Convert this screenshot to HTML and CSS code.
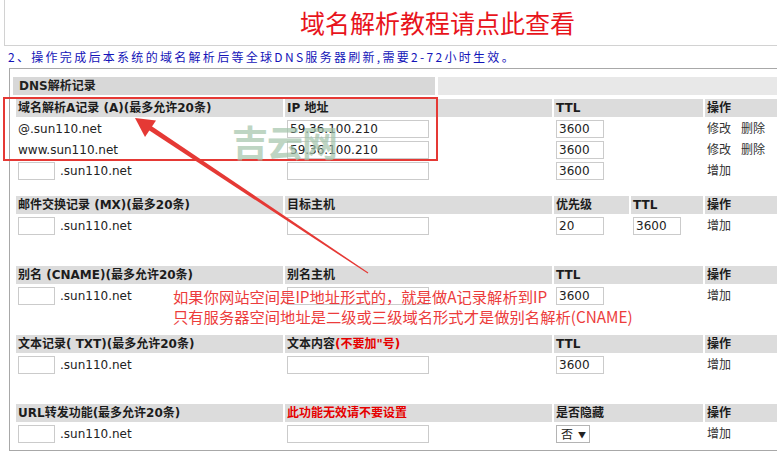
FILE: index.html
```html
<!DOCTYPE html>
<html lang="zh-CN">
<head>
  <meta charset="UTF-8" />
  <title>DNS解析记录</title>
  <link rel="stylesheet" href="styles.css">
</head>
<body>
<div class="screen">
  <div class="page">
    <div class="title-bar"><a class="title" href="#">域名解析教程请点此查看</a></div>
    <div class="notice">2、操作完成后本系统的域名解析后等全球DNS服务器刷新,需要2-72小时生效。</div>

    <div class="panel">
      <div class="panel-head">
        <div class="panel-title">DNS解析记录</div>
        <div class="panel-fill"></div>
      </div>

      <table class="records">
        <colgroup>
          <col class="c1"><col class="c2"><col class="c3"><col class="c4"><col class="c5">
        </colgroup>

        <!-- A -->
        <tr>
          <th>域名解析A记录 (A)(最多允许20条)</th>
          <th>IP 地址</th>
          <th colspan="2">TTL</th>
          <th>操作</th>
        </tr>
        <tr>
          <td>@.sun110.net</td>
          <td><input class="ip" value="59.36.100.210"></td>
          <td colspan="2"><input class="ttl" value="3600"></td>
          <td><a class="op" href="#">修改</a><a class="op" href="#">删除</a></td>
        </tr>
        <tr>
          <td>www.sun110.net</td>
          <td><input class="ip" value="59.36.100.210"></td>
          <td colspan="2"><input class="ttl" value="3600"></td>
          <td><a class="op" href="#">修改</a><a class="op" href="#">删除</a></td>
        </tr>
        <tr>
          <td><input class="sub"><span class="zone">.sun110.net</span></td>
          <td><input class="ip"></td>
          <td colspan="2"><input class="ttl" value="3600"></td>
          <td><a class="op" href="#">增加</a></td>
        </tr>
        <tr class="gap gap-s"><td colspan="5"></td></tr>

        <!-- MX -->
        <tr>
          <th>邮件交换记录 (MX)(最多20条)</th>
          <th>目标主机</th>
          <th>优先级</th>
          <th>TTL</th>
          <th>操作</th>
        </tr>
        <tr>
          <td><input class="sub"><span class="zone">.sun110.net</span></td>
          <td><input class="ip"></td>
          <td><input class="ttl" value="20"></td>
          <td><input class="ttl" value="3600"></td>
          <td><a class="op" href="#">增加</a></td>
        </tr>
        <tr class="gap gap-l"><td colspan="5"></td></tr>

        <!-- CNAME -->
        <tr>
          <th>别名 (CNAME)(最多允许20条)</th>
          <th>别名主机</th>
          <th colspan="2">TTL</th>
          <th>操作</th>
        </tr>
        <tr>
          <td><input class="sub"><span class="zone">.sun110.net</span></td>
          <td><input class="ip"></td>
          <td colspan="2"><input class="ttl" value="3600"></td>
          <td><a class="op" href="#">增加</a></td>
        </tr>
        <tr class="gap"><td colspan="5"></td></tr>

        <!-- TXT -->
        <tr>
          <th>文本记录( TXT)(最多允许20条)</th>
          <th>文本内容<span class="warn">(不要加"号)</span></th>
          <th colspan="2">TTL</th>
          <th>操作</th>
        </tr>
        <tr>
          <td><input class="sub"><span class="zone">.sun110.net</span></td>
          <td><input class="ip"></td>
          <td colspan="2"><input class="ttl" value="3600"></td>
          <td><a class="op" href="#">增加</a></td>
        </tr>
        <tr class="gap"><td colspan="5"></td></tr>

        <!-- URL -->
        <tr>
          <th>URL转发功能(最多允许20条)</th>
          <th><span class="warn">此功能无效请不要设置</span></th>
          <th colspan="2">是否隐藏</th>
          <th>操作</th>
        </tr>
        <tr>
          <td><input class="sub"><span class="zone">.sun110.net</span></td>
          <td><input class="ip"></td>
          <td colspan="2"><span class="select">否<span class="caret">▼</span></span></td>
          <td><a class="op" href="#">增加</a></td>
        </tr>
      </table>
    </div>
  </div>

  <!-- annotations drawn over the screenshot -->
  <div class="mark-box"></div>
  <div class="watermark">吉云网</div>
  <div class="note">如果你网站空间是IP地址形式的，就是做A记录解析到IP<br>只有服务器空间地址是二级或三级域名形式才是做别名解析(CNAME)</div>
  <svg class="arrow" width="777" height="457" viewBox="0 0 777 457">
    <polygon points="151.4,125.9 368.3,272.5 367.7,273.5 148.6,130.1" fill="#e53935"/>
    <polygon points="135,118 156,120.5 145,137" fill="#e53935"/>
  </svg>
</div>
</body>
</html>
```

FILE: styles.css
```css
html, body {
  margin: 0;
  overflow: hidden;
}
body {
  background: #fff;
  font-family: "DejaVu Sans", Verdana, "Noto Sans CJK SC", sans-serif;
  font-size: 12px;
  color: #222;
}
.screen {
  position: relative;
  width: 777px;
  height: 457px;
  overflow: hidden;
}
.page {
  width: 866px;
  margin-left: 4px;
}
.title-bar {
  height: 45px;
  line-height: 45px;
  border-left: 1px solid #d2d2d2;
  border-bottom: 1px solid #d2d2d2;
  text-align: center;
}
.title {
  font-family: "Noto Sans CJK SC", sans-serif;
  font-size: 25px;
  font-weight: 400;
  color: #e8141c;
  text-decoration: none;
}
.notice {
  height: 22px;
  line-height: 22px;
  padding-left: 4px;
  font-family: "Noto Sans CJK SC", sans-serif;
  font-size: 12px;
  letter-spacing: 2.3px;
  color: #1414b8;
  white-space: nowrap;
}
.panel {
  margin-left: 5px;
  border: 1px solid #a8a8a8;
  padding: 8px 0 5px 3px;
}
.panel-head {
  display: flex;
  gap: 3px;
  height: 18px;
  margin-bottom: 2px;
}
.panel-title {
  width: 416px;
  padding-left: 6px;
  background: #d8d8d8;
  font-weight: bold;
  line-height: 18px;
}
.panel-fill {
  flex: 1;
  background: #e8e8e8;
}
.records {
  border-collapse: separate;
  border-spacing: 2px;
  table-layout: fixed;
  margin-left: 1px;
}
.c1 { width: 267px; }
.c2 { width: 267px; }
.c3 { width: 75px; }
.c4 { width: 72px; }
.c5 { width: 150px; }
.records th {
  height: 18px;
  padding: 0 2px;
  background: #dcdcdc;
  text-align: left;
  font-weight: bold;
  line-height: 18px;
  white-space: nowrap;
  color: #1c1c1c;
}
.records td {
  height: 19px;
  padding: 0 1px 0 2px;
  line-height: 18px;
  white-space: nowrap;
}
.records tr.gap td { height: 26px; padding: 0; }
.records tr.gap-s td { height: 12px; }
.records tr.gap-l td { height: 27px; }
.warn {
  color: #e60000;
}
input {
  box-sizing: border-box;
  height: 18px;
  margin: 0;
  padding: 0 2px;
  border: 1px solid #cbcbcb;
  font-family: "DejaVu Sans", Verdana, sans-serif;
  font-size: 12px;
  color: #222;
  vertical-align: middle;
}
.ip { width: 142px; }
.ttl { width: 48px; }
.sub { width: 37px; }
.zone {
  margin-left: 5px;
  vertical-align: middle;
}
.select {
  display: inline-block;
  box-sizing: border-box;
  width: 34px;
  height: 18px;
  padding-left: 4px;
  border: 1px solid #b4b4b4;
  font-family: "Noto Sans CJK SC", sans-serif;
  line-height: 16px;
  vertical-align: middle;
}
.caret {
  margin-left: 5px;
  font-size: 8px;
  vertical-align: 1px;
}
.op {
  color: #333;
  text-decoration: none;
  font-family: "Noto Sans CJK SC", sans-serif;
  margin-right: 10px;
}
.mark-box {
  position: absolute;
  left: 3px;
  top: 97px;
  width: 435px;
  height: 64px;
  box-sizing: border-box;
  border: 2px solid #e53935;
}
.watermark {
  position: absolute;
  left: 232px;
  top: 121px;
  font-family: "Noto Sans CJK SC", sans-serif;
  font-size: 36px;
  font-weight: 700;
  line-height: 40px;
  color: #a3c4ab;
  opacity: 0.7;
  letter-spacing: -1px;
}
.note {
  position: absolute;
  left: 173px;
  top: 286px;
  font-family: "Noto Sans CJK SC", sans-serif;
  font-size: 15.3px;
  line-height: 20px;
  color: #ec3c3c;
  white-space: nowrap;
}
.arrow {
  position: absolute;
  left: 0;
  top: 0;
  pointer-events: none;
}
```
